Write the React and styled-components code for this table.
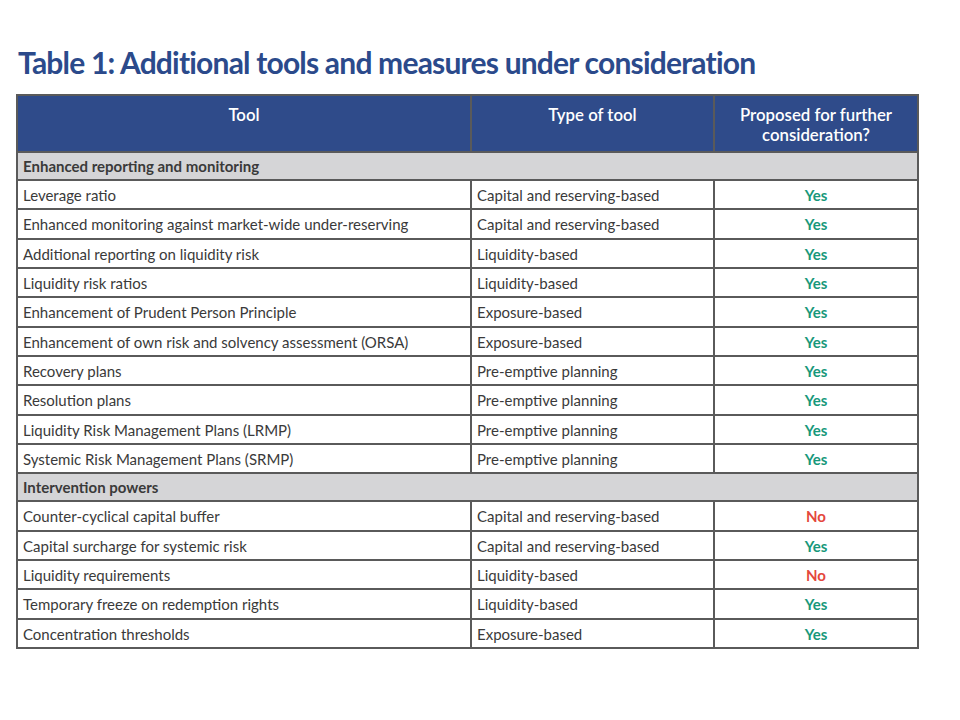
import React from "react";
import styled, { createGlobalStyle } from "styled-components";

const Global = createGlobalStyle`
  html, body { margin: 0; padding: 0; background: #fff; }
  body { font-family: Lato, "Open Sans", sans-serif; }
`;

const Page = styled.div`
  width: 960px;
  height: 720px;
  padding: 44px 0 0 16px;
  box-sizing: border-box;
`;

const Title = styled.h1`
  margin: 0 0 14px 2px;
  font-family: Lato, sans-serif;
  font-weight: 700;
  font-size: 30px;
  line-height: 36px;
  color: #2b4a8b;
  letter-spacing: -0.8px;
`;

const Table = styled.table`
  border-collapse: collapse;
  width: 901px;
  table-layout: fixed;
  font-family: Lato, sans-serif;
  font-size: 15px;
  color: #3a3a3a;
`;

const HeadCell = styled.th`
  background: #2f4b8a;
  color: #fff;
  font-weight: 600;
  font-size: 16.8px;
  line-height: 20px;
  height: 57px;
  padding: 9px 6px 0;
  vertical-align: top;
  text-align: center;
  border: 2px solid #5a5a5a;
  box-sizing: border-box;
`;

const GroupCell = styled.td`
  background: #d5d5d7;
  font-weight: 700;
  color: #3a3a3a;
  height: 28px;
  padding: 0 5px;
  border: 2px solid #5a5a5a;
  box-sizing: border-box;
`;

const Cell = styled.td`
  height: 29.33px;
  padding: 1px 5px 0;
  border: 2px solid #5a5a5a;
  box-sizing: border-box;
  text-align: ${(p) => (p.$center ? "center" : "left")};
  white-space: nowrap;
`;

const Answer = styled.span`
  font-weight: 700;
  color: ${(p) => (p.$yes ? "#17987a" : "#e4473c")};
`;

const groups = [
  {
    name: "Enhanced reporting and monitoring",
    rows: [
      ["Leverage ratio", "Capital and reserving-based", true],
      ["Enhanced monitoring against market-wide under-reserving", "Capital and reserving-based", true],
      ["Additional reporting on liquidity risk", "Liquidity-based", true],
      ["Liquidity risk ratios", "Liquidity-based", true],
      ["Enhancement of Prudent Person Principle", "Exposure-based", true],
      ["Enhancement of own risk and solvency assessment (ORSA)", "Exposure-based", true],
      ["Recovery plans", "Pre-emptive planning", true],
      ["Resolution plans", "Pre-emptive planning", true],
      ["Liquidity Risk Management Plans (LRMP)", "Pre-emptive planning", true],
      ["Systemic Risk Management Plans (SRMP)", "Pre-emptive planning", true],
    ],
  },
  {
    name: "Intervention powers",
    rows: [
      ["Counter-cyclical capital buffer", "Capital and reserving-based", false],
      ["Capital surcharge for systemic risk", "Capital and reserving-based", true],
      ["Liquidity requirements", "Liquidity-based", false],
      ["Temporary freeze on redemption rights", "Liquidity-based", true],
      ["Concentration thresholds", "Exposure-based", true],
    ],
  },
];

export default function App() {
  return (
    <Page>
      <Global />
      <Title>Table 1: Additional tools and measures under consideration</Title>
      <Table>
        <colgroup>
          <col style={{ width: 454 }} />
          <col style={{ width: 243 }} />
          <col style={{ width: 204 }} />
        </colgroup>
        <thead>
          <tr>
            <HeadCell>Tool</HeadCell>
            <HeadCell>Type of tool</HeadCell>
            <HeadCell>Proposed for further consideration?</HeadCell>
          </tr>
        </thead>
        <tbody>
          {groups.map((g) => (
            <React.Fragment key={g.name}>
              <tr>
                <GroupCell colSpan={3}>{g.name}</GroupCell>
              </tr>
              {g.rows.map(([tool, type, yes]) => (
                <tr key={tool}>
                  <Cell>{tool}</Cell>
                  <Cell>{type}</Cell>
                  <Cell $center>
                    <Answer $yes={yes}>{yes ? "Yes" : "No"}</Answer>
                  </Cell>
                </tr>
              ))}
            </React.Fragment>
          ))}
        </tbody>
      </Table>
    </Page>
  );
}
